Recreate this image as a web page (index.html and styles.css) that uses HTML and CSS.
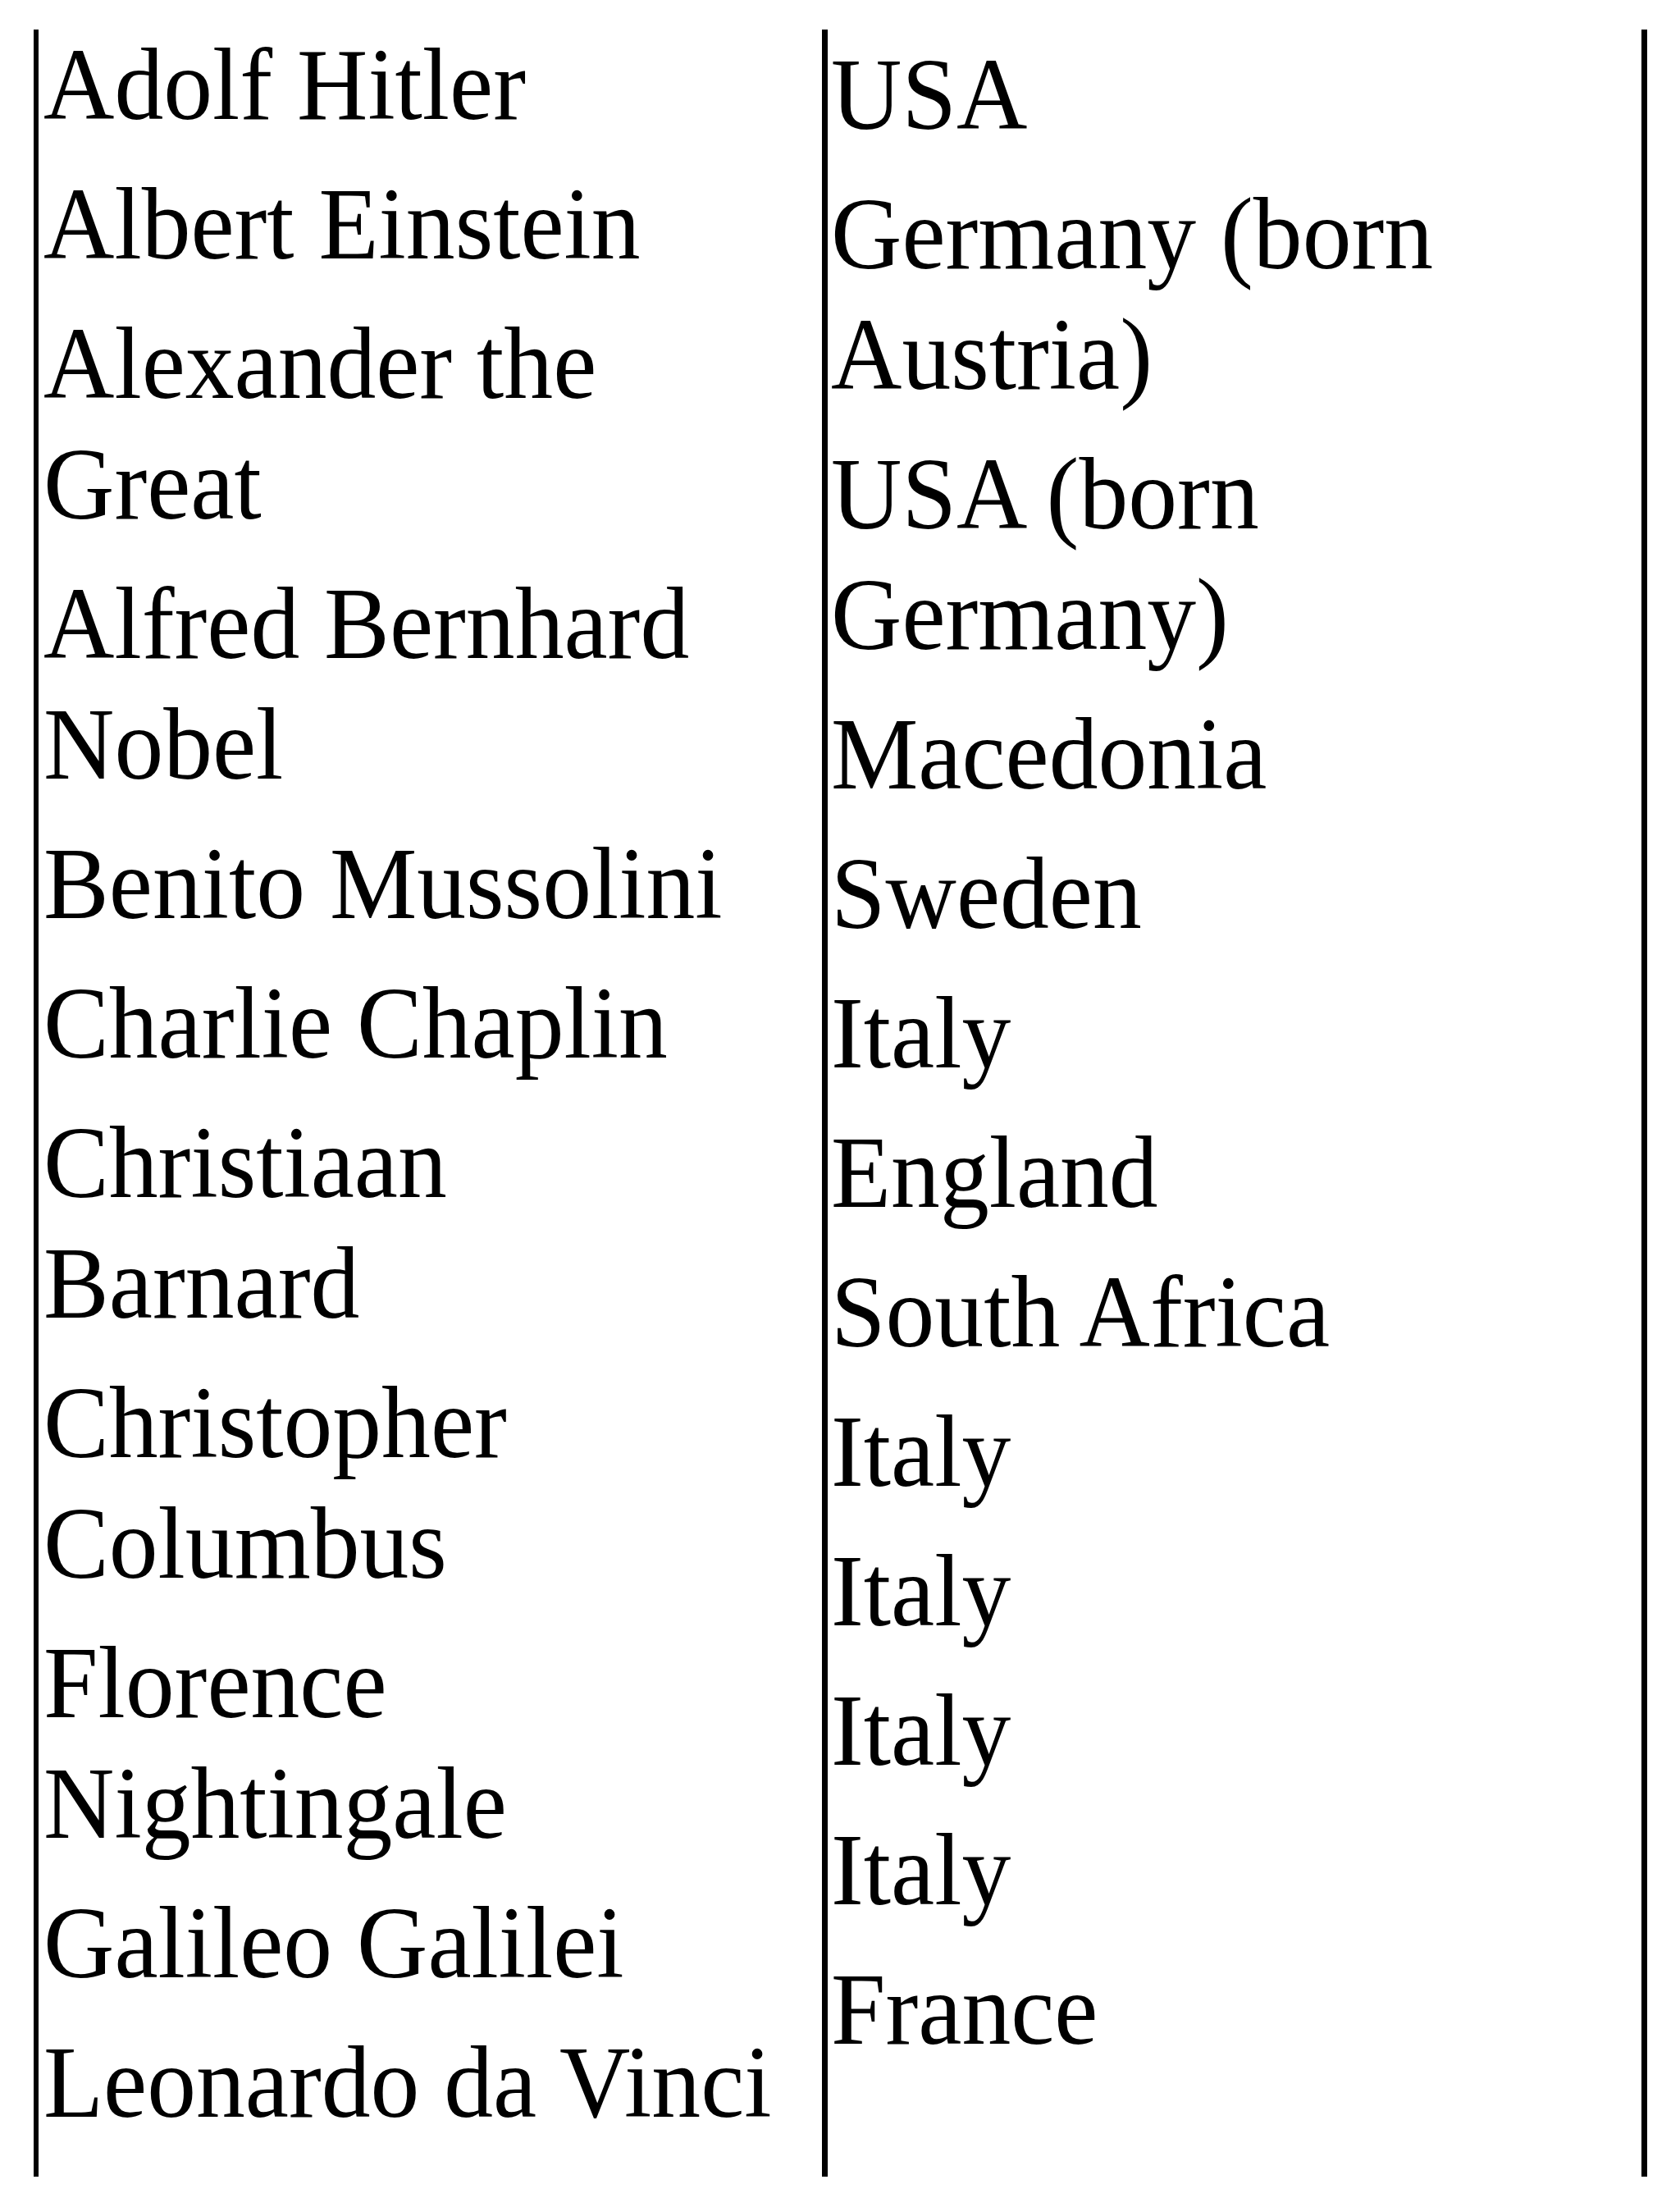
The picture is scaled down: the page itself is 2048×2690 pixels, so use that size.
FILE: index.html
```html
<!DOCTYPE html>
<html lang="en">
<head>
<meta charset="utf-8">
<title>Famous people and countries</title>
<link rel="stylesheet" href="styles.css">
</head>
<body>
<div class="table">
  <div class="cell cell-names">
    <div class="text">
      <p>Adolf Hitler</p>
      <p>Albert Einstein</p>
      <p>Alexander the<br>Great</p>
      <p>Alfred Bernhard<br>Nobel</p>
      <p>Benito Mussolini</p>
      <p>Charlie Chaplin</p>
      <p>Christiaan<br>Barnard</p>
      <p>Christopher<br>Columbus</p>
      <p>Florence<br>Nightingale</p>
      <p>Galileo Galilei</p>
      <p>Leonardo da Vinci</p>
    </div>
  </div>
  <div class="cell cell-countries">
    <div class="text">
      <p>USA</p>
      <p>Germany (born<br>Austria)</p>
      <p>USA (born<br>Germany)</p>
      <p>Macedonia</p>
      <p>Sweden</p>
      <p>Italy</p>
      <p>England</p>
      <p>South Africa</p>
      <p>Italy</p>
      <p>Italy</p>
      <p>Italy</p>
      <p>Italy</p>
      <p>France</p>
    </div>
  </div>
</div>
</body>
</html>
```

FILE: styles.css
```css
html, body {
  margin: 0;
  padding: 0;
  background: #ffffff;
}

body {
  width: 2048px;
  height: 2690px;
  overflow: hidden;
  color: #000000;
  font-family: "Liberation Serif", "Times New Roman", serif;
}

.table {
  display: grid;
  grid-template-columns: 955px 999px;
  width: 1954px;
  height: 2617px;
  margin: 36px 0 0 41px;
  border-left: 6px solid #000;
  border-right: 7px solid #000;
}

.cell {
  overflow: visible;
}

.cell-names {
  padding-left: 6px;
}

.cell-countries {
  border-left: 7px solid #000;
  padding-left: 4px;
  padding-top: 6px;
}

.cell-names .text {
  margin-top: -6px;
}

.text {
  font-size: 125px;
  line-height: 147px;
  transform: scaleX(0.957);
  transform-origin: left top;
  white-space: nowrap;
}

.text p {
  margin: 0 0 23px 0;
}
```
